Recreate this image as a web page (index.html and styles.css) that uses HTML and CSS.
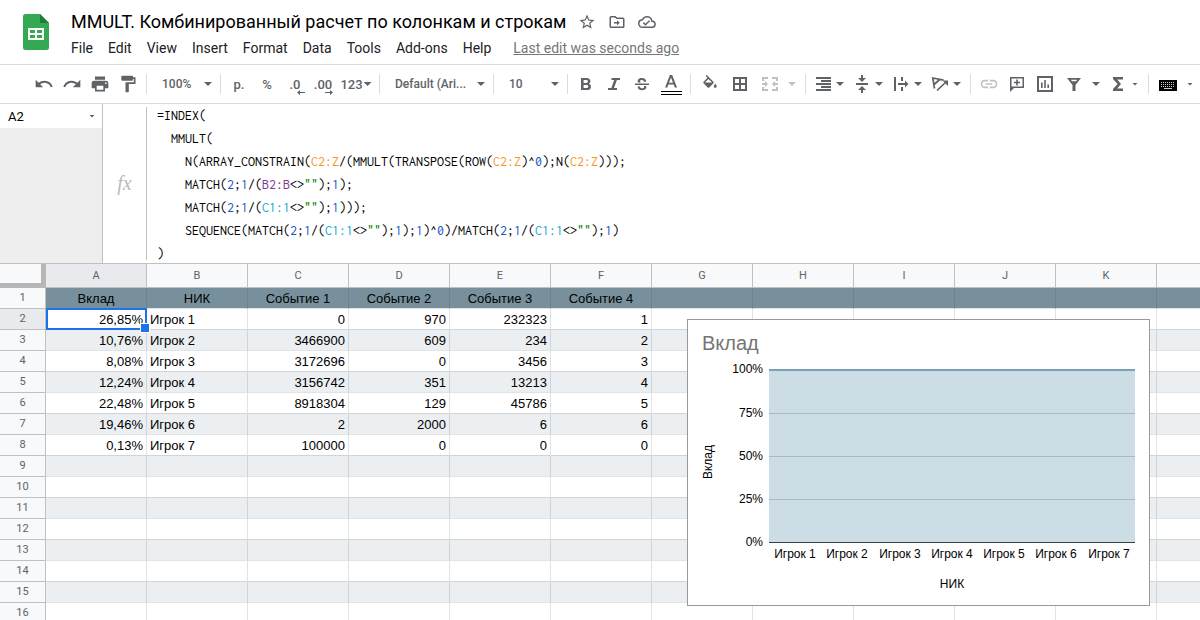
FILE: index.html
```html
<!DOCTYPE html>
<html lang="ru">
<head>
<meta charset="utf-8">
<title>MMULT. Комбинированный расчет по колонкам и строкам</title>
<link rel="stylesheet" href="styles.css">
</head>
<body>
<header class="header">
  <svg class="logo" viewBox="0 0 26 36" aria-hidden="true"><path d="M2.500 0H17l9 9v24.500a2.500 2.500 0 0 1-2.500 2.500h-21A2.500 2.500 0 0 1 0 33.500v-31A2.500 2.500 0 0 1 2.500 0z" fill="#34a853"/><path d="M17 0l9 9h-9z" fill="#188038"/><path d="M5 14h16v12H5zM7 16v3h5v-3zM14 16v3h5v-3zM7 21v3h5v-3zM14 21v3h5v-3z" fill="#fff" fill-rule="evenodd"/></svg>
  <div class="head-main">
    <div class="title-row">
      <h1 class="title">MMULT. Комбинированный расчет по колонкам и строкам</h1>
      <button class="title-btn" aria-label="Star"><svg viewBox="0 0 24 24"><path d="M22 9.240l-7.190-.62L12 2 9.190 8.630 2 9.240l5.460 4.730L5.820 21 12 17.270 18.180 21l-1.630-7.030zM12 15.400l-3.760 2.270 1-4.280-3.320-2.880 4.380-.38L12 6.100l1.710 4.040 4.380.38-3.320 2.880 1 4.280z"/></svg></button>
      <button class="title-btn" aria-label="Move"><svg viewBox="0 0 24 24"><path d="M20 6h-8l-2-2H4a2 2 0 0 0-2 2v12a2 2 0 0 0 2 2h16a2 2 0 0 0 2-2V8a2 2 0 0 0-2-2zm0 12H4V6h5.200l2 2H20zM12 9.500V12H8v2h4v2.500l3.700-3.500z"/></svg></button>
      <button class="title-btn" aria-label="Cloud status"><svg viewBox="0 0 24 24"><path d="M19.350 10.040A7.490 7.490 0 0 0 12 4C9.110 4 6.600 5.640 5.350 8.040A5.994 5.994 0 0 0 0 14a6 6 0 0 0 6 6h13a5 5 0 0 0 .35-9.960zM19 18H6a4 4 0 0 1-.45-7.970l1.070-.11.500-.95A5.470 5.470 0 0 1 12 6a5.500 5.500 0 0 1 5.390 4.430l.300 1.500 1.530.11A3 3 0 0 1 19 18zm-9-3.820l-2.090-2.090L6.500 13.500 10 17l6.010-6.010-1.410-1.410z"/></svg></button>
    </div>
    <nav class="menu">
      <button>File</button><button>Edit</button><button>View</button><button>Insert</button><button>Format</button><button>Data</button><button>Tools</button><button>Add-ons</button><button>Help</button>
      <a class="last-edit" href="#">Last edit was seconds ago</a>
    </nav>
  </div>
</header>

<div class="toolbar" role="toolbar">
  <button class="tb" aria-label="Undo"><svg viewBox="0 0 24 24"><path d="M12.500 8c-2.650 0-5.050.99-6.900 2.600L2 7v9h9l-3.620-3.620A7.990 7.990 0 0 1 20.100 16l2.370-.78A10.500 10.500 0 0 0 12.500 8z"/></svg></button>
  <button class="tb" aria-label="Redo"><svg viewBox="0 0 24 24"><path d="M18.400 10.600A10.500 10.500 0 0 0 1.540 15.220L3.900 16a8 8 0 0 1 12.720-3.620L13 16h9V7z"/></svg></button>
  <button class="tb" aria-label="Print"><svg viewBox="0 0 24 24"><path d="M19 8H5a3 3 0 0 0-3 3v6h4v4h12v-4h4v-6a3 3 0 0 0-3-3zm-3 11H8v-5h8zm3-7a1 1 0 1 1 0-2 1 1 0 0 1 0 2zM18 3H6v4h12z"/></svg></button>
  <button class="tb" aria-label="Paint format"><svg viewBox="0 0 24 24"><path d="M18 4V3a1 1 0 0 0-1-1H5a1 1 0 0 0-1 1v4a1 1 0 0 0 1 1h12a1 1 0 0 0 1-1V6h1v4H9v11a1 1 0 0 0 1 1h2a1 1 0 0 0 1-1v-9h8V4z"/></svg></button>
  <span class="sep"></span>
  <span class="drop"><select aria-label="Zoom"><option>100%</option></select><i class="arrow"></i></span>
  <span class="sep"></span>
  <button class="tb">р.</button>
  <button class="tb">%</button>
  <button class="tb dec" aria-label="Decrease decimals">.0<svg viewBox="0 0 8 5"><path d="M0 2.500L3 0v2h5v1H3v2z"/></svg></button>
  <button class="tb dec" aria-label="Increase decimals">.00<svg viewBox="0 0 8 5"><path d="M8 2.500L5 0v2H0v1h5v2z"/></svg></button>
  <button class="tb fmt">123<i class="arrow"></i></button>
  <span class="sep"></span>
  <span class="drop drop-wide"><select aria-label="Font"><option>Default (Ari...</option></select><i class="arrow"></i></span>
  <span class="sep"></span>
  <span class="drop"><select aria-label="Font size"><option>10</option></select><i class="arrow"></i></span>
  <span class="sep"></span>
  <button class="tb" aria-label="Bold"><svg viewBox="0 0 20 20"><path d="M5 4h5.600c2.300 0 3.800 1.300 3.800 3.200 0 1.200-.7 2.100-1.600 2.600 1.300.4 2.200 1.500 2.200 2.900 0 2.100-1.600 3.400-4 3.400H5zm2.600 2v2.900h2.700c1 0 1.600-.6 1.600-1.400C11.900 6.600 11.300 6 10.300 6zm0 4.900V14h3c1.100 0 1.700-.6 1.700-1.500s-.6-1.600-1.700-1.600z"/></svg></button>
  <button class="tb" aria-label="Italic"><svg viewBox="0 0 20 20"><path d="M7.500 4H16v2h-3.100l-2.900 8h3v2H4v-2h3.300l2.900-8H7.500z"/></svg></button>
  <button class="tb" aria-label="Strikethrough"><svg viewBox="0 0 20 20"><path d="M3 9.500h14v1.600H3zM14.200 7.700h-2.300c0-1.100-.7-1.800-1.900-1.800s-1.900.5-1.900 1.300c0 .5.300.9.900 1.300H5.900c-.9-2.700.9-4.600 4.100-4.600 2.600 0 4.200 1.500 4.200 3.800zM5.600 12.400h2.300c.1 1.200.8 1.800 2.200 1.800 1.300 0 2-.5 2-1.300 0-.3-.1-.6-.3-.8h2.400c.7 2.500-1 4.100-4.100 4.100-2.800 0-4.500-1.400-4.500-3.800z"/></svg></button>
  <button class="tb tb-30" aria-label="Text color"><svg class="tall" viewBox="0 0 22 24"><path d="M9.900 3h2.300L17 15.500h-2.200l-1.100-3.100H8.400l-1.100 3.100H5.100zm1.100 2.500L9 10.700h4z"/><path fill="#000" d="M1 19h21v1H1zM1 22h21v1H1z"/></svg></button>
  <span class="sep"></span>
  <button class="tb tb-30" aria-label="Fill color"><svg class="fill-icon" viewBox="0 0 24 24"><path d="M16.560 8.940L7.620 0 6.210 1.410l2.380 2.380-5.150 5.150a1.490 1.490 0 0 0 0 2.120l5.500 5.500a1.500 1.500 0 0 0 2.120 0l5.500-5.500c.59-.58.59-1.530 0-2.120zM5.210 10L10 5.210 14.790 10zM19 11.500s-2 2.170-2 3.500a2 2 0 0 0 4 0c0-1.330-2-3.500-2-3.500z"/></svg></button>
  <button class="tb tb-30" aria-label="Borders"><svg viewBox="0 0 20 20"><path fill-rule="evenodd" d="M3 3h14v14H3zm2 2v4h4V5zm6 0v4h4V5zm-6 6v4h4v-4zm6 0v4h4v-4z"/></svg></button>
  <button class="tb menu-wide faint" aria-label="Merge cells"><svg viewBox="0 0 20 20"><path d="M2 3h6v2H4v2H2zM12 3h6v4h-2V5h-4zM2 13h2v2h4v2H2zM16 13h2v4h-6v-2h4zM2 9h3V7l3 3-3 3v-2H2zM18 9h-3V7l-3 3 3 3v-2h3z"/></svg><i class="arrow"></i></button>
  <span class="sep"></span>
  <button class="tb menu-icon" aria-label="Horizontal align"><svg viewBox="0 0 20 20"><path d="M3 3h15v2H3zM8 6h10v2H8zM3 9h15v2H3zM8 12h10v2H8zM3 15h15v2H3z"/></svg><i class="arrow"></i></button>
  <button class="tb menu-icon" aria-label="Vertical align"><svg viewBox="0 0 20 20"><path d="M4 9h12v2H4zM9 1h2v3h3l-4 4-4-4h3zM9 19h2v-3h3l-4-4-4 4h3z"/></svg><i class="arrow"></i></button>
  <button class="tb menu-icon" aria-label="Text wrapping"><svg viewBox="0 0 20 20"><path d="M3 3h2v14H3zM10 3h2v4h-2zM10 13h2v4h-2zM7 9h7V6.500l3.500 3.500-3.500 3.500V11H7z"/></svg><i class="arrow"></i></button>
  <button class="tb menu-icon" aria-label="Text rotation"><svg viewBox="0 0 20 20"><path fill="none" stroke="currentColor" stroke-width="1.700" d="M4.500 14.500L2.800 4 13.500 6.200M9.800 5.500L4 10.500M7 16.500L16 8"/><path d="M12.500 6.500H18V12z"/></svg><i class="arrow"></i></button>
  <span class="sep"></span>
  <button class="tb faint" aria-label="Insert link"><svg viewBox="0 0 24 24"><path d="M3.900 12A3.100 3.100 0 0 1 7 8.900h4V7H7a5 5 0 0 0 0 10h4v-1.900H7A3.100 3.100 0 0 1 3.900 12zM8 13h8v-2H8zm9-6h-4v1.900h4a3.100 3.100 0 0 1 0 6.200h-4V17h4a5 5 0 0 0 0-10z"/></svg></button>
  <button class="tb" aria-label="Insert comment"><svg viewBox="0 0 20 20"><path fill-rule="evenodd" d="M3 3h14v11H7l-4 4zm1.500 1.500v8h11v-8zM9.200 5.500h1.600v2.200H13v1.600h-2.200v2.200H9.200V9.300H7V7.700h2.200z"/></svg></button>
  <button class="tb" aria-label="Insert chart"><svg viewBox="0 0 20 20"><path fill-rule="evenodd" d="M2 2h16v16H2zm2 2v12h12V4zM6 8.500h1.600V14H6zM9.200 6h1.600v8H9.200zM12.400 10.500H14V14h-1.600z"/></svg></button>
  <button class="tb menu-wide" aria-label="Filter"><svg viewBox="0 0 20 20"><path fill-rule="evenodd" d="M3 4h14l-5.500 7v6h-3v-6zm3.800 1.700L8 7.300h4l1.200-1.600z"/></svg><i class="arrow"></i></button>
  <button class="tb menu-icon" aria-label="Functions"><svg viewBox="0 0 20 20"><path d="M5 3h10v2.500H9.200L13 10l-3.800 4.500H15V17H5v-2l4.600-5L5 5z"/></svg><i class="arrow small"></i></button>
  <span class="sep"></span>
  <button class="tb menu-wide" aria-label="Input tools"><svg viewBox="0 0 20 20"><path fill="#000" d="M1 6h18v11H1z"/><path fill="none" stroke="#ccc" stroke-dasharray="1 1" d="M3 8.500h14M3 10.500h14M3 12.500h14"/><path fill="#ccc" d="M6 14h8v1H6z"/></svg><i class="arrow small"></i></button>
</div>

<div class="formula-bar">
  <div class="name-side">
    <label class="name-box"><input class="name-input" value="A2" aria-label="Name box"><i class="arrow small"></i></label>
  </div>
  <div class="fx">fx</div>
  <div class="formula" role="textbox" aria-label="Formula" contenteditable="true" spellcheck="false"><div>=INDEX(</div><div>  MMULT(</div><div>    N(ARRAY_CONSTRAIN(<span class="o">C2:Z</span>/(MMULT(TRANSPOSE(ROW(<span class="o">C2:Z</span>)^<span class="n">0</span>);N(<span class="o">C2:Z</span>)));</div><div>    MATCH(<span class="n">2</span>;<span class="n">1</span>/(<span class="p">B2:B</span>&lt;&gt;<span class="s">""</span>);<span class="n">1</span>);</div><div>    MATCH(<span class="n">2</span>;<span class="n">1</span>/(<span class="c">C1:1</span>&lt;&gt;<span class="s">""</span>);<span class="n">1</span>)));</div><div>    SEQUENCE(MATCH(<span class="n">2</span>;<span class="n">1</span>/(<span class="c">C1:1</span>&lt;&gt;<span class="s">""</span>);<span class="n">1</span>);<span class="n">1</span>)^<span class="n">0</span>)/MATCH(<span class="n">2</span>;<span class="n">1</span>/(<span class="c">C1:1</span>&lt;&gt;<span class="s">""</span>);<span class="n">1</span>)</div><div>)</div></div>
</div>

<main class="sheet">
  <table class="grid">
    <colgroup><col class="col-num"><col span="12" class="col"></colgroup>
    <thead><tr><td class="corner"></td><th class="active">A</th><th>B</th><th>C</th><th>D</th><th>E</th><th>F</th><th>G</th><th>H</th><th>I</th><th>J</th><th>K</th><th></th></tr></thead>
    <tbody>
      <tr class="names"><th>1</th><td>Вклад</td><td>НИК</td><td>Событие 1</td><td>Событие 2</td><td>Событие 3</td><td>Событие 4</td><td></td><td></td><td></td><td></td><td></td><td></td></tr>
      <tr><th class="active">2</th><td class="selected">26,85%</td><td class="text">Игрок 1</td><td>0</td><td>970</td><td>232323</td><td>1</td><td></td><td></td><td></td><td></td><td></td><td></td></tr>
      <tr><th>3</th><td>10,76%</td><td class="text">Игрок 2</td><td>3466900</td><td>609</td><td>234</td><td>2</td><td></td><td></td><td></td><td></td><td></td><td></td></tr>
      <tr><th>4</th><td>8,08%</td><td class="text">Игрок 3</td><td>3172696</td><td>0</td><td>3456</td><td>3</td><td></td><td></td><td></td><td></td><td></td><td></td></tr>
      <tr><th>5</th><td>12,24%</td><td class="text">Игрок 4</td><td>3156742</td><td>351</td><td>13213</td><td>4</td><td></td><td></td><td></td><td></td><td></td><td></td></tr>
      <tr><th>6</th><td>22,48%</td><td class="text">Игрок 5</td><td>8918304</td><td>129</td><td>45786</td><td>5</td><td></td><td></td><td></td><td></td><td></td><td></td></tr>
      <tr><th>7</th><td>19,46%</td><td class="text">Игрок 6</td><td>2</td><td>2000</td><td>6</td><td>6</td><td></td><td></td><td></td><td></td><td></td><td></td></tr>
      <tr><th>8</th><td>0,13%</td><td class="text">Игрок 7</td><td>100000</td><td>0</td><td>0</td><td>0</td><td></td><td></td><td></td><td></td><td></td><td></td></tr>
      <tr><th>9</th><td></td><td></td><td></td><td></td><td></td><td></td><td></td><td></td><td></td><td></td><td></td><td></td></tr>
      <tr><th>10</th><td></td><td></td><td></td><td></td><td></td><td></td><td></td><td></td><td></td><td></td><td></td><td></td></tr>
      <tr><th>11</th><td></td><td></td><td></td><td></td><td></td><td></td><td></td><td></td><td></td><td></td><td></td><td></td></tr>
      <tr><th>12</th><td></td><td></td><td></td><td></td><td></td><td></td><td></td><td></td><td></td><td></td><td></td><td></td></tr>
      <tr><th>13</th><td></td><td></td><td></td><td></td><td></td><td></td><td></td><td></td><td></td><td></td><td></td><td></td></tr>
      <tr><th>14</th><td></td><td></td><td></td><td></td><td></td><td></td><td></td><td></td><td></td><td></td><td></td><td></td></tr>
      <tr><th>15</th><td></td><td></td><td></td><td></td><td></td><td></td><td></td><td></td><td></td><td></td><td></td><td></td></tr>
      <tr><th>16</th><td></td><td></td><td></td><td></td><td></td><td></td><td></td><td></td><td></td><td></td><td></td><td></td></tr>
    </tbody>
  </table>
  <svg class="chart" viewBox="0 0 461 285" role="img" aria-label="Вклад">
    <text class="chart-title" x="14" y="30">Вклад</text>
    <rect x="81" y="50" width="366" height="173" fill="#cddde5"/>
    <path d="M81 93.500h366M81 136.500h366M81 179.500h366" stroke="#a9bac4"/>
    <path d="M81 50h366" stroke="#76a2b4" stroke-width="2"/>
    <path d="M81 222.500h366" stroke="#333f45"/>
    <g text-anchor="end"><text x="75" y="53">100%</text><text x="75" y="97">75%</text><text x="75" y="140">50%</text><text x="75" y="183">25%</text><text x="75" y="226">0%</text></g>
    <g text-anchor="middle">
      <text x="107" y="238">Игрок 1</text><text x="159" y="238">Игрок 2</text><text x="212" y="238">Игрок 3</text><text x="264" y="238">Игрок 4</text><text x="316" y="238">Игрок 5</text><text x="368" y="238">Игрок 6</text><text x="421" y="238">Игрок 7</text>
      <text x="264" y="268">НИК</text>
      <text transform="translate(24 142) rotate(-90)">Вклад</text>
    </g>
  </svg>
</main>
</body>
</html>
```

FILE: styles.css
```css
* { box-sizing: border-box; }
html, body { height: 100%; }
body {
  margin: 0;
  display: flex;
  flex-direction: column;
  overflow: hidden;
  background: #fff;
  color: #000;
  font-family: Roboto, "Liberation Sans", sans-serif;
}
button, select, input { font: inherit; color: inherit; border: 0; background: none; padding: 0; margin: 0; }
button svg { display: block; fill: currentColor; }

.header { flex: none; display: flex; height: 65px; padding-left: 23px; border-bottom: 1px solid #dadce0; }
.logo { width: 26px; height: 36px; margin-top: 14px; flex: none; }
.head-main { padding: 10px 0 0 22px; }
.title-row { display: flex; align-items: center; height: 24px; gap: 12px; }
.title { margin: 0; font-size: 18px; font-weight: 400; line-height: 24px; white-space: nowrap; }
.title-btn { width: 18px; height: 18px; color: #5f6368; }
.title-btn svg { width: 18px; height: 18px; }
.menu { display: flex; gap: 15px; height: 28px; align-items: center; font-size: 14px; color: #202124; white-space: nowrap; }
.last-edit { margin-left: 7px; color: #777; }

.toolbar { flex: none; display: flex; align-items: center; height: 39px; padding-left: 30px; border-bottom: 1px solid #dadce0; color: #5f6368; font-size: 13px; font-weight: 500; }
.tb { flex: none; display: flex; align-items: center; justify-content: center; width: 28px; height: 28px; }
.tb svg { width: 20px; height: 20px; flex: none; }
.tb-30 { width: 30px; }
.tb .tall { width: 22px; height: 24px; }
.tb .fill-icon { width: 18px; height: 18px; }
.menu-icon { width: 39px; justify-content: flex-start; padding-left: 3px; gap: 3px; }
.menu-wide { width: 46px; justify-content: flex-start; padding-left: 5px; gap: 8px; }
.faint { color: #c0c0c0; }
.fmt { width: 38px; gap: 1px; }
.dec { position: relative; }
.tb.dec svg { position: absolute; right: 4px; bottom: 3px; width: 8px; height: 5px; }
.sep { flex: none; width: 1px; height: 20px; margin: 0 4px; background: #dadce0; }
.arrow { flex: none; width: 8px; height: 4px; background: currentColor; clip-path: polygon(0 0, 100% 0, 50% 100%); }
.arrow.small { width: 6px; height: 3px; margin-left: 1px; }
.drop { flex: none; display: grid; align-items: center; width: 65px; font-size: 12px; }
.drop-wide { width: 105px; }
.drop > * { grid-area: 1 / 1; }
.drop select { appearance: none; width: 100%; height: 28px; padding-left: 11px; }
.drop .arrow { justify-self: end; margin-right: 4px; pointer-events: none; }

.formula-bar { flex: none; display: flex; height: 160px; border-bottom: 1px solid #c0c0c0; }
.name-side { width: 103px; background: #eee; border-right: 1px solid #c0c0c0; }
.name-box { display: flex; align-items: center; height: 24px; padding: 0 7px 0 8px; background: #fff; color: #5f6368; }
.name-input { flex: 1; min-width: 0; font-size: 13px; color: #000; }
.fx { display: flex; align-items: center; justify-content: center; width: 44px; margin: 3px 0; border-right: 1px solid #c0c0c0; font: italic 20px "Liberation Serif", serif; color: #bbb; }
.formula { flex: 1; min-width: 0; overflow: hidden; padding-left: 10px; white-space: pre; font-family: Inconsolata, "Noto Sans Mono CJK JP", "Liberation Mono", monospace; font-size: 14px; line-height: 23px; }
.o { color: #f7981d; }
.n { color: #1155cc; }
.p { color: #7e3794; }
.c { color: #11a9cc; }
.s { color: #008000; }

.sheet { position: relative; flex: 1; min-height: 0; overflow: hidden; }
.grid { table-layout: fixed; width: 1258px; border-collapse: separate; border-spacing: 0; font: 13px/18px "Liberation Sans", Arial, sans-serif; }
.col-num { width: 46px; }
.col { width: 101px; }
.grid th { padding: 0; height: 21px; background: #f8f9fa; color: #5f6368; font: 400 11px/18px Roboto, sans-serif; border: solid #c0c0c0; border-width: 0 1px 1px 0; }
.grid thead th { height: 24px; }
.grid .active { background: #e8eaed; }
.grid .corner { padding: 0; background: #f8f9fa; border: solid #b7b7b7; border-width: 0 5px 5px 0; }
.grid tbody td { height: 21px; padding: 2px 3px 0 3px; text-align: right; border: solid #e2e3e3; border-width: 0 1px 1px 0; }
.grid tbody .text { text-align: left; }
.grid tbody tr:nth-child(even) td { border-bottom-color: #d0d4d6; }
.grid tbody tr:nth-child(odd) td { background: #ebeff1; border-right-color: #d0d4d6; }
.grid tbody tr.names td { background: #78909c; border-right-color: #6d838e; text-align: center; }
.grid td.selected { position: relative; }
.selected::before { content: ""; position: absolute; inset: -1px -1px -1px 0; border: 2px solid #1a73e8; }
.selected::after { content: ""; position: absolute; right: -4px; bottom: -4px; width: 8px; height: 8px; background: #1a73e8; border: 1px solid #fff; }

.chart { position: absolute; left: 687px; top: 55px; width: 463px; height: 287px; background: #fff; border: 1px solid #999; font: 12px "Liberation Sans", Arial, sans-serif; }
.chart-title { font-size: 20px; fill: #757575; }
```
